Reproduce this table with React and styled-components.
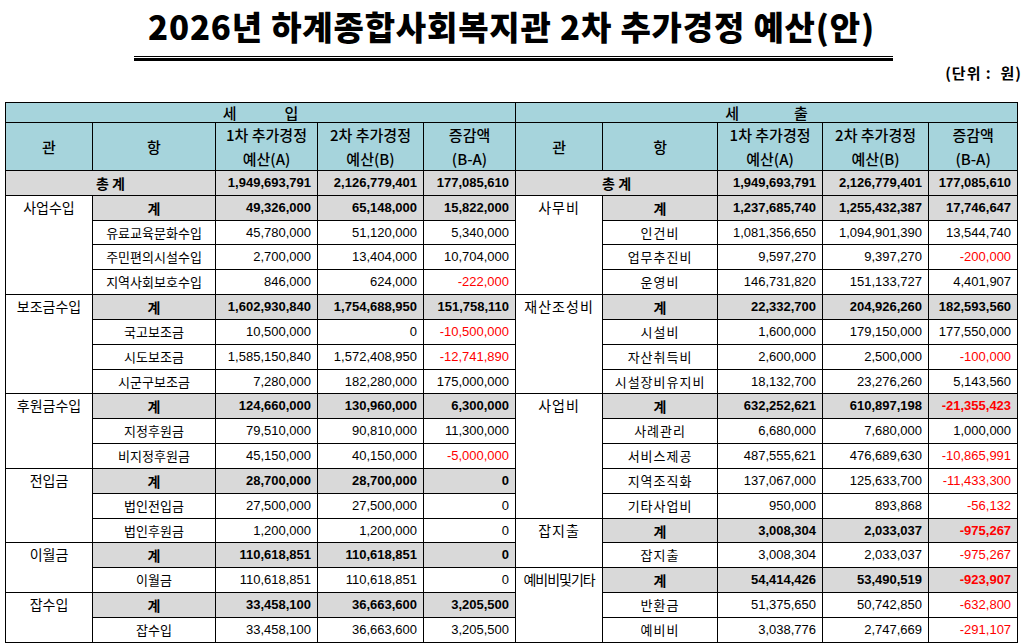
import React from 'react';
import styled, { createGlobalStyle } from 'styled-components';

const Global = createGlobalStyle`
  html, body { margin: 0; padding: 0; background: #fff; }
  body { font-family: "Noto Sans CJK KR", "Noto Sans", sans-serif; color: #000; }
`;

const Page = styled.div`
  width: 1023px;
  height: 644px;
  overflow: hidden;
  box-sizing: border-box;
  padding-top: 6px;
`;

const Title = styled.h1`
  margin: 0;
  text-align: center;
  font-family: "Noto Sans CJK KR", sans-serif;
  font-size: 33px;
  font-weight: 900;
  line-height: 40px;
  letter-spacing: 0.8px;
`;

const Rule = styled.div`
  margin: 10px 0 0 134px;
  width: 759px;
  height: 1px;
  border-top: 1px solid #000;
  border-bottom: 3px solid #000;
`;

const Unit = styled.div`
  margin-top: 3px;
  padding-right: 1px;
  text-align: right;
  font-size: 15px;
  font-weight: 700;
  line-height: 18px;
  letter-spacing: 1px;
  white-space: pre;
`;

const Table = styled.table`
  margin: 20px 0 0 5px;
  width: 1013px;
  border-collapse: collapse;
  table-layout: fixed;
`;

const HeadRow = styled.tr`
  height: ${p => p.$h}px;
`;

const HeadCell = styled.th`
  background: #a6d4dc;
  border: 1px solid #000;
  padding: 0;
  font-size: 15px;
  font-weight: 500;
  line-height: ${p => p.$lh || 23.5}px;
  letter-spacing: 0;
  text-align: center;
  vertical-align: middle;
  white-space: nowrap;
`;

const Spread = styled.span`
  display: inline-flex;
  gap: ${p => p.$gap}px;
`;

const BodyRow = styled.tr`
  height: 24.84px;
`;

const Cell = styled.td`
  border: 1px solid #000;
  padding: 0;
  background: ${p => (p.$shade ? '#d9d9d9' : '#fff')};
  white-space: nowrap;
  overflow: hidden;
`;

const GwanCell = styled(Cell)`
  vertical-align: top;
  text-align: center;
  font-size: 14px;
  line-height: 22px;
  letter-spacing: ${p => p.$ls}px;
`;

const LabelCell = styled(Cell)`
  text-align: center;
  vertical-align: middle;
  font-size: ${p => (p.$bold ? 14 : 13)}px;
  font-weight: ${p => (p.$bold ? 700 : 400)};
  letter-spacing: ${p => p.$ls}px;
  line-height: 20px;
`;

const NumCell = styled(Cell)`
  text-align: right;
  vertical-align: middle;
  padding-right: 6px;
  font-family: "Liberation Sans", Arial, sans-serif;
  font-size: 13px;
  font-weight: ${p => (p.$bold ? 700 : 400)};
  color: ${p => (p.$neg ? '#ff0000' : '#000')};
  line-height: 20px;
`;

const left = [
  { gwan: '사업수입', total: ['49,326,000', '65,148,000', '15,822,000'], items: [
    ['유료교육문화수입', '45,780,000', '51,120,000', '5,340,000'],
    ['주민편의시설수입', '2,700,000', '13,404,000', '10,704,000'],
    ['지역사회보호수입', '846,000', '624,000', '-222,000'],
  ] },
  { gwan: '보조금수입', total: ['1,602,930,840', '1,754,688,950', '151,758,110'], items: [
    ['국고보조금', '10,500,000', '0', '-10,500,000'],
    ['시도보조금', '1,585,150,840', '1,572,408,950', '-12,741,890'],
    ['시군구보조금', '7,280,000', '182,280,000', '175,000,000'],
  ] },
  { gwan: '후원금수입', total: ['124,660,000', '130,960,000', '6,300,000'], items: [
    ['지정후원금', '79,510,000', '90,810,000', '11,300,000'],
    ['비지정후원금', '45,150,000', '40,150,000', '-5,000,000'],
  ] },
  { gwan: '전입금', total: ['28,700,000', '28,700,000', '0'], items: [
    ['법인전입금', '27,500,000', '27,500,000', '0'],
    ['법인후원금', '1,200,000', '1,200,000', '0'],
  ] },
  { gwan: '이월금', total: ['110,618,851', '110,618,851', '0'], items: [
    ['이월금', '110,618,851', '110,618,851', '0'],
  ] },
  { gwan: '잡수입', total: ['33,458,100', '36,663,600', '3,205,500'], items: [
    ['잡수입', '33,458,100', '36,663,600', '3,205,500'],
  ] },
];

const right = [
  { gwan: '사무비', total: ['1,237,685,740', '1,255,432,387', '17,746,647'], items: [
    ['인건비', '1,081,356,650', '1,094,901,390', '13,544,740'],
    ['업무추진비', '9,597,270', '9,397,270', '-200,000'],
    ['운영비', '146,731,820', '151,133,727', '4,401,907'],
  ] },
  { gwan: '재산조성비', total: ['22,332,700', '204,926,260', '182,593,560'], items: [
    ['시설비', '1,600,000', '179,150,000', '177,550,000'],
    ['자산취득비', '2,600,000', '2,500,000', '-100,000'],
    ['시설장비유지비', '18,132,700', '23,276,260', '5,143,560'],
  ] },
  { gwan: '사업비', total: ['632,252,621', '610,897,198', '-21,355,423'], items: [
    ['사례관리', '6,680,000', '7,680,000', '1,000,000'],
    ['서비스제공', '487,555,621', '476,689,630', '-10,865,991'],
    ['지역조직화', '137,067,000', '125,633,700', '-11,433,300'],
    ['기타사업비', '950,000', '893,868', '-56,132'],
  ] },
  { gwan: '잡지출', total: ['3,008,304', '2,033,037', '-975,267'], items: [
    ['잡지출', '3,008,304', '2,033,037', '-975,267'],
  ] },
  { gwan: '예비비및기타', tight: true, total: ['54,414,426', '53,490,519', '-923,907'], items: [
    ['반환금', '51,375,650', '50,742,850', '-632,800'],
    ['예비비', '3,038,776', '2,747,669', '-291,107'],
  ] },
];

const flatten = groups => {
  const rows = [];
  groups.forEach(g => {
    rows.push({ gwan: g.gwan, span: g.items.length + 1, tight: g.tight, total: true, label: '계', values: g.total });
    g.items.forEach(it => rows.push({ total: false, label: it[0], values: it.slice(1) }));
  });
  return rows;
};

const leftRows = flatten(left);
const rightRows = flatten(right);

const Side = ({ row, ls }) => (
  <>
    {row.gwan && (
      <GwanCell rowSpan={row.span} $ls={row.tight ? -1 : ls}>{row.gwan}</GwanCell>
    )}
    <LabelCell $shade={row.total} $bold={row.total} $ls={row.total ? 0 : ls}>{row.label}</LabelCell>
    {row.values.map((v, i) => (
      <NumCell key={i} $shade={row.total} $bold={row.total} $neg={v.startsWith('-')}>{v}</NumCell>
    ))}
  </>
);

const widths = [87, 123, 102, 106, 92, 87, 115, 105, 106, 89];

const HeadGroup = () => (
  <>
    <HeadCell>관</HeadCell>
    <HeadCell>항</HeadCell>
    <HeadCell>1차 추가경정<br />예산(A)</HeadCell>
    <HeadCell>2차 추가경정<br />예산(B)</HeadCell>
    <HeadCell>증감액<br />(B-A)</HeadCell>
  </>
);

export default function App() {
  return (
    <Page>
      <Global />
      <Title>2026년 하계종합사회복지관 2차 추가경정 예산(안)</Title>
      <Rule />
      <Unit>(단위 :  원)</Unit>
      <Table>
        <colgroup>
          {widths.map((w, i) => <col key={i} style={{ width: w }} />)}
        </colgroup>
        <thead>
          <HeadRow $h={20}>
            <HeadCell colSpan={5} $lh={17}><Spread $gap={48}><span>세</span><span>입</span></Spread></HeadCell>
            <HeadCell colSpan={5} $lh={17}><Spread $gap={55}><span>세</span><span>출</span></Spread></HeadCell>
          </HeadRow>
          <HeadRow $h={47}>
            <HeadGroup />
            <HeadGroup />
          </HeadRow>
        </thead>
        <tbody>
          <BodyRow>
            <LabelCell colSpan={2} $shade $bold $ls={0}>총 계</LabelCell>
            <NumCell $shade $bold>1,949,693,791</NumCell>
            <NumCell $shade $bold>2,126,779,401</NumCell>
            <NumCell $shade $bold>177,085,610</NumCell>
            <LabelCell colSpan={2} $shade $bold $ls={0}>총 계</LabelCell>
            <NumCell $shade $bold>1,949,693,791</NumCell>
            <NumCell $shade $bold>2,126,779,401</NumCell>
            <NumCell $shade $bold>177,085,610</NumCell>
          </BodyRow>
          {leftRows.map((lr, i) => (
            <BodyRow key={i}>
              <Side row={lr} ls={0} />
              <Side row={rightRows[i]} ls={1} />
            </BodyRow>
          ))}
        </tbody>
      </Table>
    </Page>
  );
}
